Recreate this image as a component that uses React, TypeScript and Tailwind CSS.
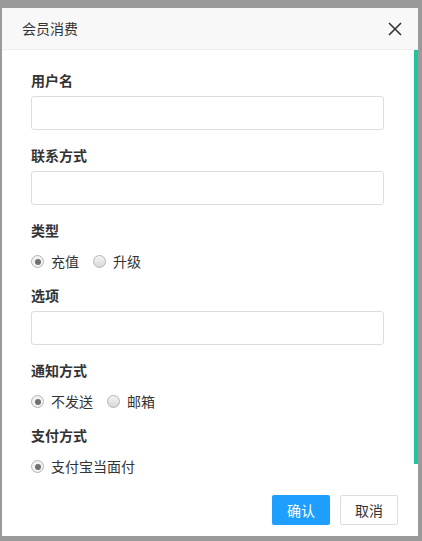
import { useState } from "react";

const font = { fontFamily: '"Noto Sans CJK SC", "Noto Sans", sans-serif' };

function Radio({ checked, label, onClick }: { checked: boolean; label: string; onClick: () => void }) {
  return (
    <label className="mr-[14px] flex cursor-pointer items-center" onClick={onClick}>
      <span
        className={
          "flex h-[13px] w-[13px] items-center justify-center rounded-full border border-[#b5b5b5] " +
          (checked ? "bg-[#f2f2f2]" : "bg-gradient-to-b from-[#f4f4f4] to-[#d8d8d8]")
        }
      >
        {checked && <span className="h-[6px] w-[6px] rounded-full bg-[#707070]" />}
      </span>
      <span className="ml-[7px] text-[14px] text-[#333]">{label}</span>
    </label>
  );
}

function Field({ label }: { label: string }) {
  return (
    <div className="mb-[15px]">
      <div className="mb-[6px] h-[20px] text-[14px] font-bold leading-[20px] text-[#333]">{label}</div>
      <input className="block h-[34px] w-full rounded-[3px] border border-[#ddd] bg-white px-2 text-[14px] outline-none" />
    </div>
  );
}

function RadioGroup({ label, options }: { label: string; options: string[] }) {
  const [value, setValue] = useState(options[0]);
  return (
    <div className="mb-[7px]">
      <div className="mb-[5px] h-[20px] text-[14px] font-bold leading-[20px] text-[#333]">{label}</div>
      <div className="flex h-[33px] items-center">
        {options.map((o) => (
          <Radio key={o} label={o} checked={value === o} onClick={() => setValue(o)} />
        ))}
      </div>
    </div>
  );
}

export default function App() {
  return (
    <div className="h-[541px] w-[422px] bg-[#9a9a9a] pl-[2px] pt-[8px]" style={font}>
      <div className="flex h-[528px] w-[416px] flex-col bg-white">
        <div className="flex h-[42px] items-center justify-between border-b border-[#eee] bg-[#f8f8f8] pl-[20px] pr-[16px]">
          <span className="text-[14px] text-[#333]">会员消费</span>
          <svg width="14" height="14" viewBox="0 0 14 14" className="text-[#333]">
            <path d="M1 1L13 13M13 1L1 13" stroke="currentColor" strokeWidth="1.6" fill="none" />
          </svg>
        </div>
        <div className="flex h-[437px]">
          <div className="flex-1 pl-[29px] pr-[30px] pt-[20px]">
            <Field label="用户名" />
            <Field label="联系方式" />
            <RadioGroup label="类型" options={["充值", "升级"]} />
            <Field label="选项" />
            <RadioGroup label="通知方式" options={["不发送", "邮箱"]} />
            <RadioGroup label="支付方式" options={["支付宝当面付"]} />
          </div>
          <div className="w-[4px]">
            <div className="h-[414px] bg-[#22c39f]" />
          </div>
        </div>
        <div className="flex justify-end gap-[10px] pr-[20px] pt-[8px]">
          <button className="h-[30px] w-[58px] rounded-[2px] bg-[#1e9fff] text-[14px] text-white">确认</button>
          <button className="h-[30px] w-[58px] rounded-[2px] border border-[#dedede] bg-white text-[14px] text-[#333]">取消</button>
        </div>
      </div>
    </div>
  );
}
